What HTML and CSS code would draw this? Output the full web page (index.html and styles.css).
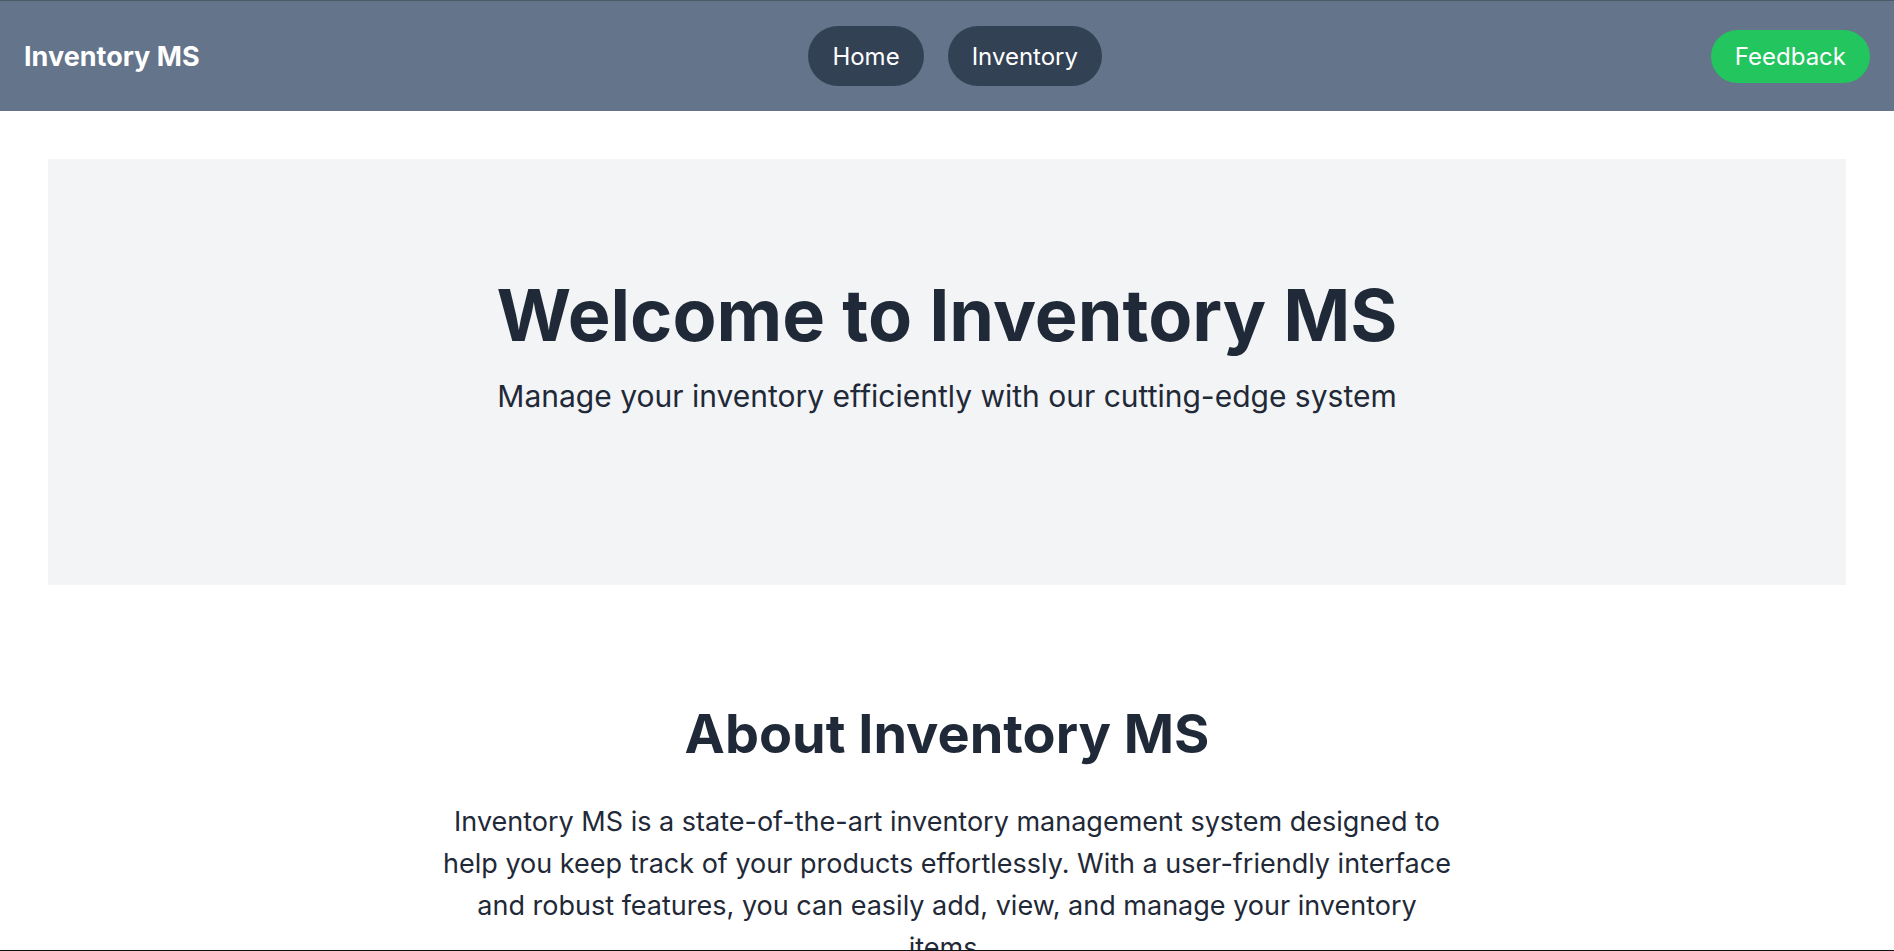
FILE: index.html
```html
<!DOCTYPE html>
<html lang="en">
<head>
<meta charset="utf-8">
<title>Inventory MS</title>
<link rel="stylesheet" href="styles.css">
</head>
<body>
<header class="topbar">
  <a class="brand" href="#">Inventory MS</a>
  <nav class="nav">
    <a class="nav-pill" href="#">Home</a>
    <a class="nav-pill" href="#">Inventory</a>
  </nav>
  <a class="feedback" href="#">Feedback</a>
</header>
<main class="main">
  <section class="hero">
    <h1 class="hero-title">Welcome to Inventory MS</h1>
    <p class="hero-sub">Manage your inventory efficiently with our cutting-edge system</p>
  </section>
  <section class="about">
    <h2 class="about-title">About Inventory MS</h2>
    <p class="about-text">Inventory MS is a state-of-the-art inventory management system designed to help you keep track of your products effortlessly. With a user-friendly interface and robust features, you can easily add, view, and manage your inventory items.</p>
  </section>
</main>
<div class="frame-bottom"></div>
</body>
</html>
```
FILE: styles.css
```css
* { box-sizing: border-box; }
html, body { margin: 0; padding: 0; }
body {
  font-family: Inter, "Noto Sans", sans-serif;
  color: #1f2937;
  background: #ffffff;
}
a { text-decoration: none; }

.topbar {
  display: flex;
  align-items: center;
  justify-content: space-between;
  height: 111px;
  padding: 0 24px;
  background: #64748b;
  border-top: 1px solid #4b5a63;
}
.brand {
  margin-top: 2px;
  color: #ffffff;
  font-weight: 700;
  font-size: 27px;
  line-height: 34px;
}
.nav {
  display: flex;
  gap: 24px;
}
.nav-pill {
  display: flex;
  align-items: center;
  height: 60px;
  padding: 0 24px;
  border-radius: 9999px;
  background: #334155;
  color: #ffffff;
  font-size: 24px;
}
.feedback {
  display: flex;
  align-items: center;
  height: 53px;
  padding: 0 24px;
  border-radius: 9999px;
  background: #22c55e;
  color: #ffffff;
  font-size: 24px;
}

.main {
  padding: 48px 48px 0;
}
.hero {
  height: 426px;
  padding-top: 120px;
  background: #f3f4f6;
  text-align: center;
}
.hero-title {
  margin: 0;
  font-size: 72px;
  line-height: 72px;
  font-weight: 700;
}
.hero-sub {
  margin: 25px 0 0;
  font-size: 30px;
  line-height: 40px;
}
.about {
  padding-top: 122px;
  text-align: center;
}
.about-title {
  margin: 0;
  font-size: 54px;
  line-height: 54px;
  font-weight: 700;
}
.about-text {
  max-width: 1012px;
  margin: 40px auto 0;
  font-size: 27px;
  line-height: 42px;
}
.frame-bottom {
  position: fixed;
  left: 0;
  right: 0;
  bottom: 0;
  height: 1px;
  background: #111111;
}
```
